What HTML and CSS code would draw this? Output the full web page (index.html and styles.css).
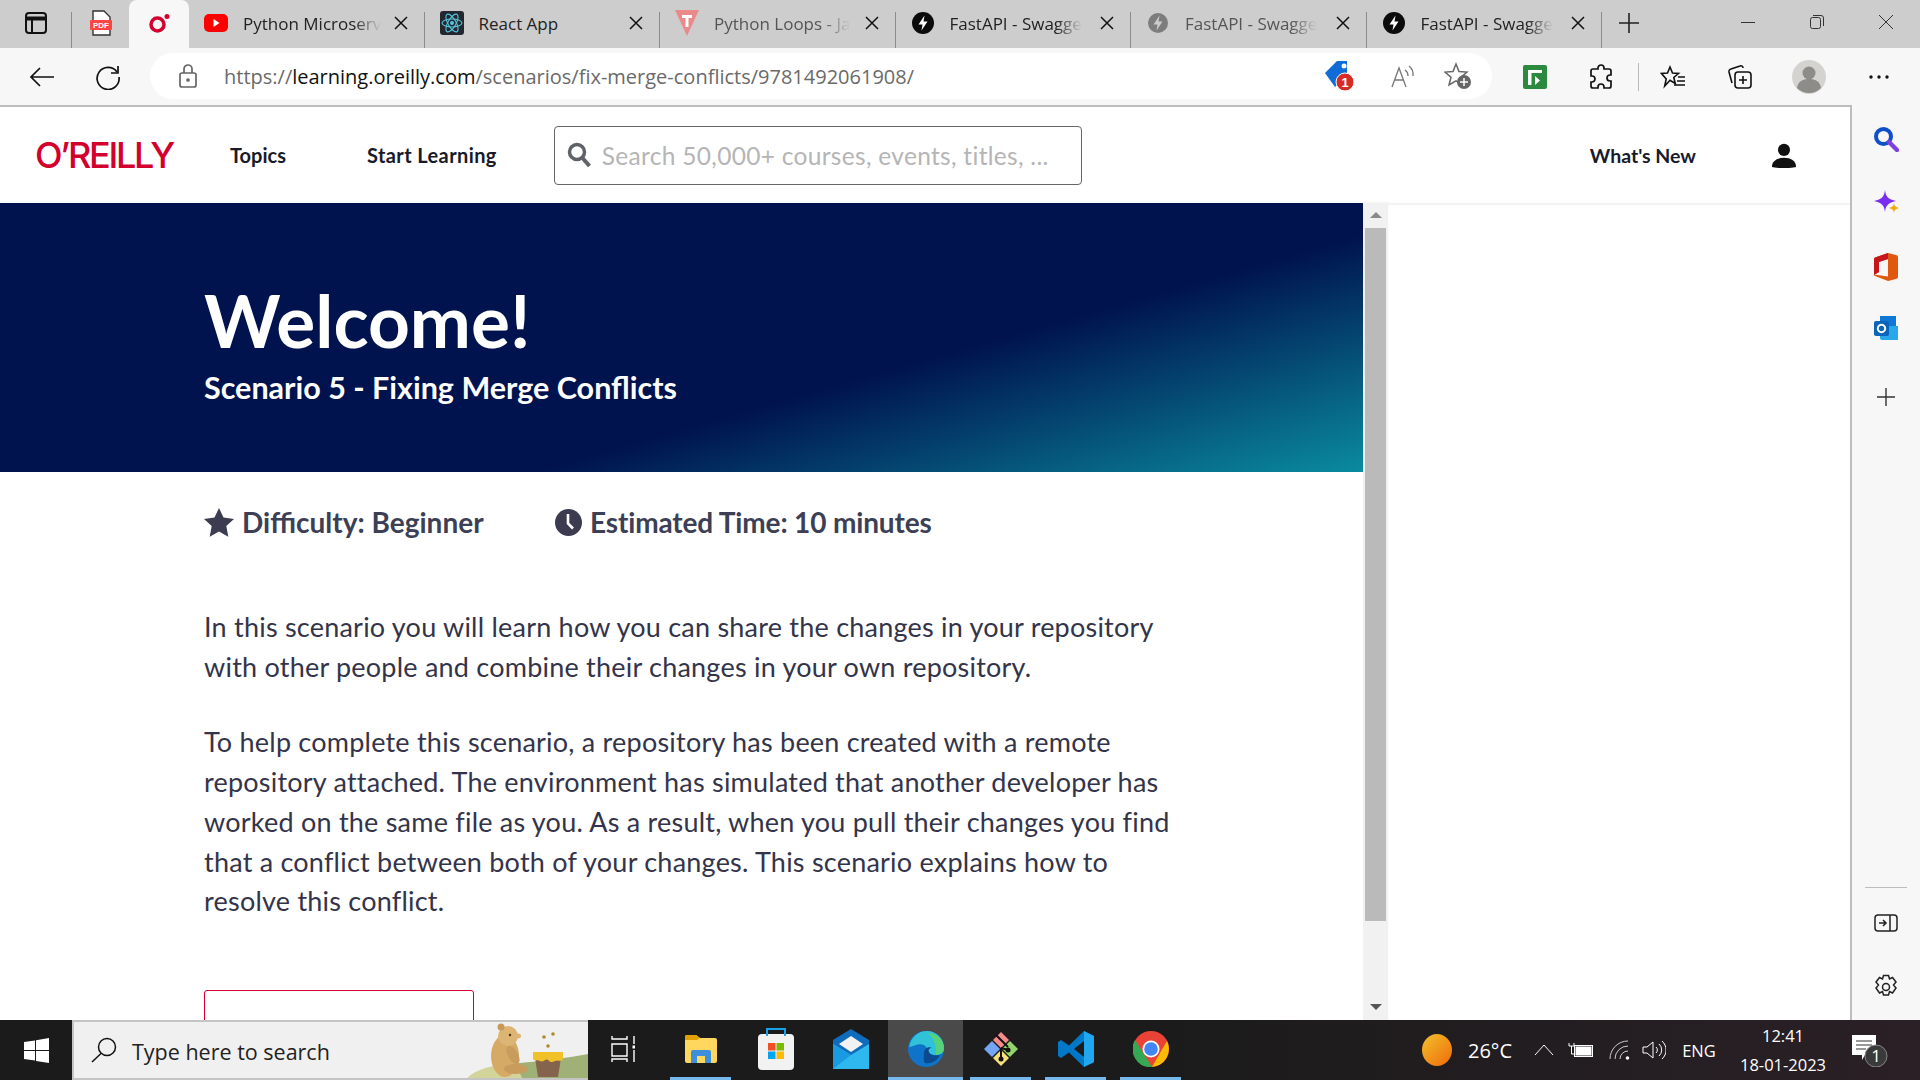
FILE: index.html
```html
<!DOCTYPE html>
<html lang="en">
<head>
<meta charset="utf-8">
<title>Fix Merge Conflicts</title>
<link rel="stylesheet" href="styles.css">
</head>
<body>
<div class="screen">
  <div class="tabstrip">
    <div class="strip-btn"><svg width="24" height="24" viewBox="0 0 24 24" fill="none" stroke="#111" stroke-width="2"><rect x="2" y="2" width="20" height="20" rx="3"/><path d="M2 7.500h20" stroke-width="4"/><path d="M8 7v15"/></svg></div>
    <div class="pin-tab pdf"><svg width="24" height="26" viewBox="0 0 24 26"><path d="M4 1h11l6 6v18H4z" fill="#fff" stroke="#333" stroke-width="1.400"/><rect x="1" y="10" width="22" height="10" rx="1" fill="#f44"/><text x="12" y="18" font-size="8" font-weight="700" fill="#fff" text-anchor="middle" font-family="Liberation Sans">PDF</text></svg></div>
    <div class="pin-tab active"><svg width="24" height="24" viewBox="0 0 24 24" fill="none"><circle cx="10.500" cy="13.500" r="6.500" stroke="#d3002d" stroke-width="3.500"/><circle cx="20" cy="5.500" r="2.500" fill="#d3002d"/></svg></div>
    <div class="tab">
      <svg class="fav" width="24" height="18" viewBox="0 0 24 18"><rect width="24" height="18" rx="5" fill="#f00"/><path d="M9.500 5l6 4-6 4z" fill="#fff"/></svg>
      <span class="tab-title">Python Microserv</span><svg class="tab-x" width="14" height="14" viewBox="0 0 14 14" stroke="#111" stroke-width="1.500"><path d="M1 1l12 12M13 1L1 13"/></svg>
    </div>
    <div class="tab">
      <svg class="fav" width="24" height="24" viewBox="0 0 24 24"><rect width="24" height="24" rx="3" fill="#23272f"/><g fill="none" stroke="#58c4dc" stroke-width="1.100"><ellipse cx="12" cy="12" rx="10" ry="4"/><ellipse cx="12" cy="12" rx="10" ry="4" transform="rotate(60 12 12)"/><ellipse cx="12" cy="12" rx="10" ry="4" transform="rotate(120 12 12)"/></g><circle cx="12" cy="12" r="2" fill="#58c4dc"/></svg>
      <span class="tab-title plain">React App</span><svg class="tab-x" width="14" height="14" viewBox="0 0 14 14" stroke="#111" stroke-width="1.500"><path d="M1 1l12 12M13 1L1 13"/></svg>
    </div>
    <div class="tab dim">
      <svg class="fav" width="24" height="28" viewBox="0 0 24 28"><path d="M0 1h24L12 27z" fill="#ea8a8a"/><path d="M7 6h10v3h-3.500v9h-3V9H7z" fill="#fff"/></svg>
      <span class="tab-title">Python Loops - Ja</span><svg class="tab-x" width="14" height="14" viewBox="0 0 14 14" stroke="#111" stroke-width="1.500"><path d="M1 1l12 12M13 1L1 13"/></svg>
    </div>
    <div class="tab">
      <svg class="fav" width="24" height="22" viewBox="-1 0 24 22"><circle cx="11" cy="11" r="11" fill="#0b0b0b"/><path d="M12.500 3.500L6.500 12.500h4l-1 6 6-9h-4z" fill="#fff"/></svg>
      <span class="tab-title">FastAPI - Swagge</span><svg class="tab-x" width="14" height="14" viewBox="0 0 14 14" stroke="#111" stroke-width="1.500"><path d="M1 1l12 12M13 1L1 13"/></svg>
    </div>
    <div class="tab dim">
      <svg class="fav" width="24" height="22" viewBox="-1 0 24 22"><circle cx="11" cy="11" r="10" fill="#7d7d7d"/><path d="M12.500 3.500L6.500 12.500h4l-1 6 6-9h-4z" fill="#ccc"/></svg>
      <span class="tab-title">FastAPI - Swagge</span><svg class="tab-x" width="14" height="14" viewBox="0 0 14 14" stroke="#111" stroke-width="1.500"><path d="M1 1l12 12M13 1L1 13"/></svg>
    </div>
    <div class="tab">
      <svg class="fav" width="24" height="22" viewBox="-1 0 24 22"><circle cx="11" cy="11" r="11" fill="#0b0b0b"/><path d="M12.500 3.500L6.500 12.500h4l-1 6 6-9h-4z" fill="#fff"/></svg>
      <span class="tab-title">FastAPI - Swagge</span><svg class="tab-x" width="14" height="14" viewBox="0 0 14 14" stroke="#111" stroke-width="1.500"><path d="M1 1l12 12M13 1L1 13"/></svg>
    </div>
    <div class="new-tab"><svg width="22" height="22" viewBox="0 0 22 22" stroke="#222" stroke-width="1.600"><path d="M11 1v20M1 11h20"/></svg></div>
    <div class="win-ctrls">
      <div class="win-btn"><svg width="16" height="16" viewBox="0 0 16 16" stroke="#333"><path d="M1 8.500h14"/></svg></div>
      <div class="win-btn"><svg width="16" height="16" viewBox="0 0 16 16" fill="none" stroke="#333"><rect x="1.500" y="3.500" width="10" height="11" rx="2"/><path d="M4 1.500h8a2.500 2.500 0 0 1 2.500 2.500v8"/></svg></div>
      <div class="win-btn"><svg width="16" height="16" viewBox="0 0 16 16" stroke="#333"><path d="M1 1l14 14M15 1L1 15"/></svg></div>
    </div>
  </div>

  <div class="toolbar">
    <div class="tool"><svg width="26" height="22" viewBox="0 0 26 22" fill="none" stroke="#111" stroke-width="1.700"><path d="M25 11H2M11 2l-9 9 9 9"/></svg></div>
    <div class="tool"><svg width="26" height="26" viewBox="0 0 26 26" fill="none" stroke="#111" stroke-width="1.700"><path d="M22 8a11 11 0 1 0 2 5"/><path d="M23 2v7h-7"/></svg></div>
    <div class="address">
      <svg class="lock" width="18" height="24" viewBox="0 0 18 24" fill="none" stroke="#666" stroke-width="1.700"><rect x="1" y="9" width="16" height="14" rx="2"/><path d="M5 9V5a4 4 0 0 1 8 0v4"/><circle cx="9" cy="16" r="1" fill="#666"/></svg>
      <span class="url">https://<b>learning.oreilly.com</b>/scenarios/fix-merge-conflicts/9781492061908/</span>
      <div class="addr-icons">
        <div class="addr-a"><svg width="34" height="34" viewBox="0 0 34 34"><path d="M2 14L14 2h10v14L12 28z" fill="#0f6cd6"/><circle cx="21" cy="7" r="2.500" fill="#fff"/><circle cx="22" cy="23" r="9" fill="#d92b26" stroke="#fff"/><text x="22" y="28" font-size="13" font-weight="700" fill="#fff" text-anchor="middle" font-family="Liberation Sans">1</text></svg></div>
        <div class="addr-b"><svg width="26" height="24" viewBox="0 0 26 24" fill="none" stroke="#777" stroke-width="1.300"><path d="M2 23L9 4l7 19M4.500 16h9"/><path d="M15 6a7 7 0 0 1 3 6M19 2a11 11 0 0 1 4 10"/></svg></div>
        <div class="addr-c"><svg width="28" height="28" viewBox="0 0 28 28"><path d="M12 2l3 7.500 8 .6-6 5.100 2 7.800-7-4.200-7 4.200 2-7.800-6-5.100 8-.6z" fill="none" stroke="#666" stroke-width="1.500"/><circle cx="20" cy="20" r="7" fill="#666"/><path d="M20 16v8M16 20h8" stroke="#fff" stroke-width="1.500"/></svg></div>
      </div>
    </div>
    <div class="tool-grid">
      <div class="tool-cell"><svg width="24" height="24" viewBox="0 0 24 24"><rect width="24" height="24" rx="2" fill="#2b8a3e"/><path d="M5 20V5h14v3H8.500v12z" fill="#fff"/><path d="M12 11l5 4.500-5 4.500z" fill="#fff"/></svg></div>
      <div class="tool-cell"><svg width="24" height="26" viewBox="0 0 24 26" fill="none" stroke="#111" stroke-width="1.700"><path d="M9 4a3 3 0 0 1 6 0l0 1h5a2 2 0 0 1 2 2v4h-1a3 3 0 0 0 0 6h1v5a2 2 0 0 1-2 2h-5v-1a3 3 0 0 0-6 0v1H4a2 2 0 0 1-2-2v-4h1a3 3 0 0 0 0-6H2V7a2 2 0 0 1 2-2h5z"/></svg></div>
      <div class="tool-cell"><span class="tool-sep"></span></div>
      <div class="tool-cell"><svg width="26" height="26" viewBox="0 0 26 26" fill="none" stroke="#111" stroke-width="1.600"><path d="M10 3l2.500 6 6 .5-4.700 4 1.500 6-5.300-3.300L4.700 22l1.500-7L1.500 9.500l6-.5z"/><path d="M18 13h7M17 17h8M14 21h11"/></svg></div>
      <div class="tool-cell"><svg width="26" height="26" viewBox="0 0 26 26" fill="none" stroke="#111" stroke-width="1.600"><rect x="8" y="8" width="16" height="16" rx="3"/><path d="M16 12v8M12 16h8"/><path d="M5 19L2 8a2.500 2.500 0 0 1 2-3l9-3a2 2 0 0 1 3 2"/></svg></div>
      <div class="tool-cell"><svg width="34" height="34" viewBox="0 0 34 34"><circle cx="17" cy="17" r="17" fill="#d4d3cf"/><circle cx="17" cy="13" r="6.500" fill="#8d8c88"/><path d="M5 28c1-7 6-9 12-9s11 2 12 9a17 17 0 0 1-24 0z" fill="#8d8c88"/></svg></div>
      <div class="tool-cell dots"><svg width="20" height="4" viewBox="0 0 20 4" fill="#111"><circle cx="2" cy="2" r="1.700"/><circle cx="10" cy="2" r="1.700"/><circle cx="18" cy="2" r="1.700"/></svg></div>
    </div>
  </div>

  <div class="workspace">
    <div class="page">
      <header class="site-header">
        <span class="logo">O’REILLY</span>
        <a class="nav nav-topics">Topics</a>
        <a class="nav nav-start">Start Learning</a>
        <div class="search">
          <svg width="24" height="26" viewBox="0 0 24 26" fill="none" stroke="#5f6368"><circle cx="10" cy="10" r="7.500" stroke-width="3.500"/><path d="M15.500 16l7 8" stroke-width="4"/></svg>
          <span class="placeholder">Search 50,000+ courses, events, titles, ...</span>
        </div>
        <a class="nav nav-new">What's New</a>
        <svg class="user" width="26" height="26" viewBox="0 0 28 28" fill="#111"><circle cx="14" cy="8.500" r="6.500"/><path d="M1 27c0-7 6-10 13-10s13 3 13 10c-4 1.500-22 1.500-26 0z"/></svg>
      </header>
      <div class="page-body">
        <main class="content">
          <section class="hero">
            <h1 class="hero-title">Welcome!</h1>
            <p class="hero-sub">Scenario 5 - Fixing Merge Conflicts</p>
          </section>
          <section class="article">
            <div class="meta">
              <span class="meta-item meta-first"><svg width="30" height="29" viewBox="0 0 30 29" fill="#3c3c50"><path d="M15 0l4.500 9.600 10.500 1.300-7.700 7.200 2 10.600L15 23.600 5.700 28.700l2-10.600L0 10.900l10.500-1.300z"/></svg>Difficulty: Beginner</span>
              <span class="meta-item meta-second"><svg width="27" height="27" viewBox="0 0 27 27"><circle cx="13.500" cy="13.500" r="13.500" fill="#3c3c50"/><path d="M13 5v9.500l5 5" fill="none" stroke="#fff" stroke-width="2.600"/></svg>Estimated Time: 10 minutes</span>
            </div>
            <p class="para">In this scenario you will learn how you can share the changes in your repository with other people and combine their changes in your own repository.</p>
            <p class="para">To help complete this scenario, a repository has been created with a remote repository attached. The environment has simulated that another developer has worked on the same file as you. As a result, when you pull their changes you find that a conflict between both of your changes. This scenario explains how to resolve this conflict.</p>
            <div class="start-btn"></div>
          </section>
        </main>
        <div class="scrollbar">
          <span class="arrow-up"></span>
          <span class="thumb"></span>
          <span class="arrow-down"></span>
        </div>
        <div class="blank"></div>
      </div>
    </div>
    <aside class="sidebar">
      <svg class="side-a" width="26" height="26" viewBox="0 0 26 26" fill="none"><circle cx="10.500" cy="10.500" r="7.500" stroke="#0f4fc9" stroke-width="4"/><path d="M16 16l8 8" stroke="#7c3fe0" stroke-width="4.500" stroke-linecap="round"/></svg>
      <svg class="side-b" width="28" height="28" viewBox="0 0 28 28"><path d="M12 1c1 7 3 9 11 11-8 2-10 4-11 11-1-7-3-9-11-11 8-2 10-4 11-11z" fill="#7a2ff0"/><path d="M21 14c.5 3 1.500 4 5 5-3.500 1-4.500 2-5 5-.5-3-1.500-4-5-5 3.500-1 4.500-2 5-5z" fill="#f2a90c"/></svg>
      <svg class="side-c" width="24" height="28" viewBox="0 0 24 28"><path d="M0 6Q0 5 1 4.500L14 0l8 2q2 .5 2 2v20q0 1.500-2 2l-8 2-13-5q-1-.5-1-1.500l14 2V6L5 9v10l-5 3z" fill="#e0570f"/><path d="M0 6q0-1 1-1.500L14 0v6L5 9v10l-5 3z" fill="#c4161c"/></svg>
      <svg class="side-d" width="24" height="24" viewBox="0 0 24 24"><rect x="6" y="0" width="16" height="12" fill="#0f78d4"/><path d="M6 10h18v14H8a2 2 0 0 1-2-2z" fill="#28a8ea"/><rect x="0" y="5" width="15" height="15" rx="2" fill="#0a64b8"/><circle cx="7.500" cy="12.500" r="3.700" fill="none" stroke="#fff" stroke-width="2"/></svg>
      <svg class="side-e" width="18" height="18" viewBox="0 0 18 18" stroke="#333" stroke-width="1.400"><path d="M9 0v18M0 9h18"/></svg>
      <span class="side-spacer"></span>
      <span class="side-rule"></span>
      <svg class="side-f" width="24" height="18" viewBox="0 0 24 18" fill="none" stroke="#222" stroke-width="1.500"><rect x="1" y="1" width="22" height="16" rx="3"/><path d="M16 1v16M5 9h7M9 6l3 3-3 3"/></svg>
      <svg class="side-g" width="24" height="26" viewBox="0 0 24 26" fill="none" stroke="#222" stroke-width="1.500"><path d="M9.500 1.500h5l1 3.500 3-1.500 3.500 4.500-2.500 3 2.500 3-3.500 5-3-1.500-1 3.500h-5l-1-3.500-3 1.500-3.500-5 2.500-3-2.500-3 3.500-4.500 3 1.500z"/><circle cx="12" cy="13" r="3.500"/></svg>
    </aside>
  </div>

  <footer class="taskbar">
    <div class="start"><svg width="25" height="25" viewBox="0 0 25 25" fill="#fff"><path d="M0 4l11-1.600V12H0zM12 2.200L25 0v12H12zM0 13h11v9.600L0 21zM12 13h13v12l-13-2z"/></svg></div>
    <div class="task-search">
      <svg width="26" height="26" viewBox="0 0 26 26" fill="none" stroke="#111" stroke-width="1.500"><circle cx="16" cy="10" r="8.500"/><path d="M10 16.500L1 25"/></svg>
      <span class="task-search-text">Type here to search</span>
      <svg class="bear" width="120" height="56" viewBox="0 0 120 56"><path d="M0 56c8-10 40-14 62-16s35-4 58-8v24z" fill="#9fb176"/><path d="M0 56c8-10 30-14 48-15l6 15z" fill="#d3d49a"/><ellipse cx="37" cy="34" rx="14" ry="21" fill="#d5aa66"/><circle cx="40" cy="14" r="10" fill="#dcb473"/><circle cx="33" cy="5" r="3.500" fill="#c99a56"/><circle cx="42" cy="13" r="1.200" fill="#4a3015"/><ellipse cx="50" cy="14" rx="3" ry="2.500" fill="#dcb473"/><ellipse cx="45" cy="33" rx="5" ry="10" fill="#c89c5c" transform="rotate(-30 45 33)"/><ellipse cx="48" cy="47" rx="12" ry="5" fill="#c89c5c"/><path d="M67 36h26l-3 19H70z" fill="#84644c"/><path d="M65 30h30v7c-3 4-5 0-8 2s-5 1-7-1-5 3-8 1-5 1-7-2z" fill="#f1c12a"/><circle cx="76" cy="15" r="1.800" fill="#b08a2a"/><circle cx="85" cy="12" r="1.800" fill="#b08a2a"/><circle cx="80" cy="24" r="1.800" fill="#b08a2a"/></svg>
    </div>
    <div class="task-view"><svg width="24" height="28" viewBox="0 0 24 28" fill="none" stroke="#fff" stroke-width="1.400"><path d="M1 1v3h15V1M1 9h15v12H1zM1 27v-3h15v3M23 1v8M23 15v12"/><rect x="21.500" y="10.500" width="3" height="3" fill="#fff" stroke="none"/></svg></div>
    <div class="task-app run"><svg width="32" height="28" viewBox="0 0 32 28"><path d="M0 2a2 2 0 0 1 2-2h9l4 3h15a2 2 0 0 1 2 2v21a2 2 0 0 1-2 2H2a2 2 0 0 1-2-2z" fill="#ffd75e"/><path d="M0 2a2 2 0 0 1 2-2h9l4 3-3 2H0z" fill="#e0a100"/><path d="M6 28V17a2 2 0 0 1 2-2h16a2 2 0 0 1 2 2v11h-6v-7h-8v7z" fill="#3d8fdc"/></svg></div>
    <div class="task-app"><svg width="36" height="42" viewBox="0 0 36 42"><rect x="0" y="6" width="36" height="36" rx="4" fill="#f2f2f2"/><path d="M9 8V1h18v7" fill="none" stroke="#1aa2e8" stroke-width="2"/><rect x="10" y="15" width="7.500" height="7.500" fill="#f25022"/><rect x="18.500" y="15" width="7.500" height="7.500" fill="#7fba00"/><rect x="10" y="23.500" width="7.500" height="7.500" fill="#00a4ef"/><rect x="18.500" y="23.500" width="7.500" height="7.500" fill="#ffb900"/></svg></div>
    <div class="task-app"><svg width="36" height="40" viewBox="0 0 36 40"><path d="M0 11L18 0l18 11v29H0z" fill="#0f6cbd"/><path d="M6 15L18 7l12 8-12 8z" fill="#f2f2f2"/><path d="M0 15l18 11 18-11v25H0z" fill="#2fb8f0"/><path d="M0 40V15l18 11z" fill="#1a9ae0"/></svg></div>
    <div class="task-app run current"><svg width="36" height="36" viewBox="0 0 36 36"><circle cx="18" cy="18" r="18" fill="#0f74c9"/><path d="M1 16C3 6 10 0 19 0c10 0 17 8 17 17 0 5-4 7-8 7-5 0-9-1-9-5 0-5-6-7-11-5-3 1-6 2-7 2z" fill="#2fc2d8"/><path d="M20 2c9 0 16 7 16 15 0 5-4 7-8 7 1-8-2-17-8-22z" fill="#56d27c"/><path d="M16 22c0-4 4-7 8-5-3 0-4 2-3 4 1 3 6 4 11 3-3 6-9 9-15 8-2-2-1-7-1-10z" fill="#0b4a8f"/></svg></div>
    <div class="task-app run"><svg width="36" height="36" viewBox="0 0 36 36"><path d="M18 1l8 8-8 8-8-8z" fill="#f98a8a"/><path d="M9 10l8 8-8 8-8-8z" fill="#74a6f5"/><path d="M27 10l8 8-8 8-8-8z" fill="#93d56a"/><path d="M18 19l8 8-8 8-8-8z" fill="#f7df7a"/><path d="M13 4l12 12M18 17v12M18 17l7 2" stroke="#111" stroke-width="2" fill="none"/><circle cx="18" cy="28" r="2.500" fill="#111"/><circle cx="25" cy="19" r="2.500" fill="#111"/></svg></div>
    <div class="task-app run"><svg width="36" height="36" viewBox="0 0 36 36"><path d="M26 0l10 5v26l-10 5-15-14.500L3 27l-3-2v-14l3-2 8 5.500z" fill="#0078c8"/><path d="M26 0l10 5v26l-10 5z" fill="#1fa7ef"/><path d="M26 10v16l-10-8z" fill="#1c1c1c"/></svg></div>
    <div class="task-app run"><svg width="36" height="36" viewBox="0 0 36 36"><circle cx="18" cy="18" r="18" fill="#ea4335"/><path d="M34 10a18 18 0 0 1-15 26l8-14z" fill="#fbbc05"/><path d="M2 9l9 14 8 13A18 18 0 0 1 2 9z" fill="#34a853"/><circle cx="18" cy="18" r="8.500" fill="#fff"/><circle cx="18" cy="18" r="6.800" fill="#4285f4"/></svg></div>
    <div class="tray">
      <div class="tray-cell"><span class="sun"></span></div>
      <div class="tray-cell tray-temp">26°C</div>
      <div class="tray-cell"><svg width="20" height="12" viewBox="0 0 20 12" fill="none" stroke="#fff"><path d="M1 11l9-10 9 10"/></svg></div>
      <div class="tray-cell"><svg width="26" height="16" viewBox="0 0 26 16" fill="none" stroke="#fff"><rect x="6.500" y="3.500" width="18" height="11"/><rect x="8" y="5" width="15" height="8" fill="#fff"/><path d="M1 1v3h5V1M3.500 4v8h3"/></svg></div>
      <div class="tray-cell"><svg width="22" height="20" viewBox="0 0 22 20" fill="none" stroke="#ccc"><path d="M1 19A18 18 0 0 1 19 1M6 19A13 13 0 0 1 19 6M11 19a8 8 0 0 1 8-8"/><circle cx="18.500" cy="18" r="1.800" fill="#fff" stroke="none"/></svg></div>
      <div class="tray-cell"><svg width="24" height="20" viewBox="0 0 24 20" fill="none" stroke="#fff"><path d="M1 7h4l6-5v16l-6-5H1z"/><path d="M14 7a4 4 0 0 1 0 6M17 4a8 8 0 0 1 0 12M20 1a12 12 0 0 1 0 18"/></svg></div>
      <div class="tray-cell tray-lang">ENG</div>
      <div class="tray-clock"><span>12:41</span><span>18-01-2023</span></div>
      <div class="tray-cell notif"><svg width="36" height="34" viewBox="0 0 36 34"><path d="M0 2h24v20H13l-3 5v-5H0z" fill="#fff"/><path d="M4 8h16M4 12h16M4 16h10" stroke="#333" stroke-width="1.200"/><circle cx="24" cy="23" r="11" fill="#3a3a3a" stroke="#888"/><text x="24" y="29" font-size="17" fill="#fff" text-anchor="middle" font-family="Open Sans">1</text></svg></div>
      <div class="tray-cell"></div>
    </div>
  </footer>
</div>
</body>
</html>
```
FILE: styles.css
```css
* { box-sizing: border-box; }
html, body { margin: 0; padding: 0; height: 100%; }
body { font-family: "Open Sans", "Noto Sans", sans-serif; background: #fff; }
.screen { width: 1920px; height: 1080px; display: flex; flex-direction: column; overflow: hidden; }

/* Tab strip */
.tabstrip { height: 48px; flex: none; background: #cdcdcd; display: flex; color: #222; }
.strip-btn { width: 71px; display: flex; align-items: center; justify-content: center; padding-bottom: 2px; }
.pin-tab { width: 58px; display: flex; align-items: center; justify-content: center; padding-bottom: 2px; }
.pin-tab.pdf { border-left: 1px solid #8c8c8c; height: 36px; margin-top: 12px; padding-bottom: 14px; }
.pin-tab.active { width: 60px; background: #f7f7f7; border-radius: 8px 8px 0 0; }
.tab { width: 235.500px; flex: none; display: flex; align-items: center; padding-left: 15px; position: relative; padding-bottom: 2px; }
.tab::after { content: ""; position: absolute; right: 0; top: 12px; bottom: 0; width: 1px; background: #8c8c8c; }
.fav { flex: none; }
.tab-title { margin-left: 15px; white-space: nowrap; font-size: 17px; -webkit-mask-image: linear-gradient(to right, #000 80%, transparent 100%); mask-image: linear-gradient(to right, #000 80%, transparent 100%); }
.tab-title.plain { -webkit-mask-image: none; mask-image: none; }
.tab.dim { color: #555; }
.tab-x { margin-left: auto; margin-right: 17px; flex: none; }
.new-tab { width: 54px; display: flex; align-items: center; justify-content: center; padding-bottom: 2px; }
.win-ctrls { margin-left: auto; display: flex; }
.win-btn { width: 69px; display: flex; align-items: center; justify-content: center; padding-bottom: 4px; }

/* Toolbar */
.toolbar { height: 57px; flex: none; background: #f7f7f7; display: flex; align-items: center; padding-left: 12px; }
.tool { width: 60px; margin-right: 6px; display: flex; justify-content: center; align-items: center; }
.address { width: 1342px; height: 46px; margin-left: 6px; background: #fff; border-radius: 23px; display: flex; align-items: center; padding-left: 29px; padding-right: 6px; margin-top: -2px; }
.lock { flex: none; }
.url { margin-left: 27px; margin-top: 1px; font-size: 20px; color: #6a6a6a; white-space: nowrap; }
.url b { font-weight: 400; color: #111; }
.addr-icons { margin-left: auto; display: flex; align-items: center; }
.addr-a { width: 70px; display: flex; justify-content: center; }
.addr-b { width: 55px; display: flex; justify-content: center; }
.addr-c { width: 56px; display: flex; justify-content: center; }
.tool-grid { display: grid; grid-template-columns: 86px 46px 28px 42px 92px 46px 88px; width: 428px; flex: none; }
.tool-cell { display: flex; align-items: center; justify-content: center; height: 40px; }
.tool-sep { width: 1px; height: 28px; background: #bbb; }
.dots { padding-left: 6px; }

/* Workspace */
.workspace { flex: 1; display: flex; min-height: 0; background: #f7f7f7; }
.page { width: 1852px; flex: none; background: #fff; border-top: 2px solid #bdbdbd; border-right: 2px solid #bdbdbd; display: flex; flex-direction: column; min-height: 0; }
.site-header { height: 96px; flex: none; display: flex; align-items: center; padding-left: 35px; background: #fff; }
.logo { width: 138px; flex: none; font-family: "Inter", "Liberation Sans", sans-serif; font-size: 36px; font-weight: 500; letter-spacing: -2.300px; color: #d3002d; white-space: nowrap; }
.nav { font-family: "Lato", sans-serif; font-weight: 700; font-size: 20px; color: #181a2a; white-space: nowrap; }
.nav-topics { margin-left: 57px; }
.nav-start { margin-left: 81px; letter-spacing: .4px; }
.search { width: 528px; height: 59px; margin-left: 57px; border: 1px solid #666; border-radius: 4px; display: flex; align-items: center; padding-left: 12px; flex: none; }
.placeholder { margin-left: 11px; font-family: "Lato", sans-serif; font-size: 24.500px; color: #b5b5b5; white-space: nowrap; letter-spacing: .3px; }
.nav-new { margin-left: auto; font-size: 19.500px; }
.user { margin-left: 75px; margin-right: 53px; flex: none; }

.page-body { flex: 1; display: flex; min-height: 0; }
.content { width: 1363px; flex: none; overflow: hidden; }
.hero { height: 269px; background: linear-gradient(164deg, #00134f 0%, #00134f 64%, #0a8b9f 100%); padding: 77px 0 0 204px; color: #fff; }
.hero-title { margin: 0; font-family: "Lato", sans-serif; font-size: 73px; line-height: 80px; font-weight: 700; }
.hero-sub { margin: 7px 0 0; font-family: "Lato", sans-serif; font-size: 30.500px; line-height: 40px; font-weight: 700; }
.article { padding: 30px 0 0 204px; color: #33344a; font-family: "Lato", sans-serif; }
.meta { display: flex; height: 40px; align-items: center; font-size: 28px; font-weight: 700; color: #3c3f55; margin-bottom: 65px; }
.meta-item { display: flex; align-items: center; gap: 8px; white-space: nowrap; }
.meta-first { width: 351px; flex: none; }
.meta-second { letter-spacing: -.15px; }
.para { margin: 0 0 36px; width: 985px; font-size: 27px; letter-spacing: .22px; line-height: 39.700px; }
.start-btn { width: 270px; height: 60px; margin-top: 69px; border: 1px solid #d3002d; border-radius: 3px; }
.scrollbar { width: 25px; flex: none; background: #f1f1f1; display: flex; flex-direction: column; align-items: center; box-shadow: 2px 0 3px rgba(0,0,0,.08); padding: 9px 0 7px; }
.arrow-up { width: 0; height: 0; border-left: 6px solid transparent; border-right: 6px solid transparent; border-bottom: 6px solid #8a8a8a; }
.thumb { width: 21px; height: 693px; margin-top: 10px; background: #bababa; }
.arrow-down { margin-top: auto; margin-bottom: 3px; width: 0; height: 0; border-left: 6px solid transparent; border-right: 6px solid transparent; border-top: 6px solid #555; }
.blank { flex: 1; background: #fff; box-shadow: inset 0 2px 2px rgba(0,0,0,.05); }

/* Sidebar */
.sidebar { flex: 1; display: flex; flex-direction: column; align-items: center; padding-top: 21px; }
.side-b { margin-top: 37px; margin-left: 2px; flex: none; }
.side-c { margin-top: 36px; flex: none; }
.side-d { margin-top: 35px; flex: none; }
.side-e { margin-top: 48px; flex: none; }
.side-spacer { flex: 1; }
.side-rule { width: 42px; height: 1px; background: #bdbdbd; margin-bottom: 26px; }
.side-f { margin-bottom: 42px; flex: none; }
.side-g { margin-bottom: 20px; flex: none; }

/* Taskbar */
.taskbar { height: 60px; flex: none; background: linear-gradient(to right, #1b1b1b 0%, #1b1b1b 60%, #2a2026 100%); display: flex; color: #fff; }
.start { width: 72px; display: flex; align-items: center; justify-content: center; }
.task-search { width: 516px; height: 60px; background: #f0f0f0; border: solid #c4c4c4; border-width: 2px 0 2px 2px; display: flex; align-items: center; padding-left: 17px; position: relative; color: #222; }
.task-search-text { margin-left: 15px; margin-top: 2px; font-size: 21.500px; white-space: nowrap; }
.bear { position: absolute; right: 0; bottom: 0; }
.task-view { width: 75px; display: flex; align-items: center; justify-content: center; padding-bottom: 2px; padding-right: 5px; }
.task-app { width: 75px; display: flex; align-items: center; justify-content: center; position: relative; padding-bottom: 3px; }
.task-app.run::after { content: ""; position: absolute; left: 7px; right: 7px; bottom: 0; height: 3px; background: #76b9ed; }
.task-app.current { background: #4a4a4a; }
.task-app.current::after { left: 0; right: 0; }
.tray { margin-left: auto; display: grid; grid-template-columns: 40px 66px 41px 34px 44px 24px 66px 102px 72px 14px; width: 503px; flex: none; align-items: center; height: 60px; }
.tray-cell { display: flex; align-items: center; justify-content: center; }
.sun { width: 30px; height: 32px; border-radius: 50%; background: linear-gradient(135deg, #f2c12c, #f06a0a); }
.tray-temp { font-size: 20px; }
.tray-lang { font-size: 16.500px; }
.tray-clock { display: flex; flex-direction: column; align-items: center; font-size: 16.500px; line-height: 29px; }
```
